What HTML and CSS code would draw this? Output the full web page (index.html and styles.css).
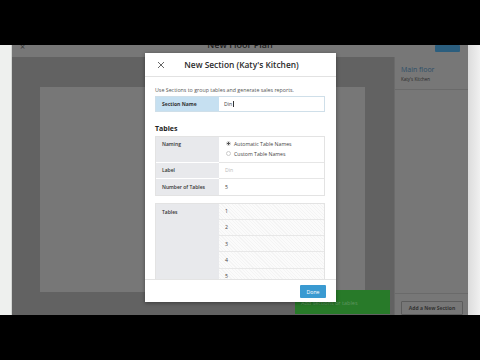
FILE: index.html
```html
<!DOCTYPE html>
<html>
<head>
<meta charset="utf-8">
<link rel="stylesheet" href="styles.css">
</head>
<body>
<div class="screen">
  <div class="bar"></div>
  <div class="stage">
    <div class="side-left"></div>
    <div class="app">
      <header class="app-head">
        <span class="app-close">×</span>
        <span class="app-title">New Floor Plan</span>
        <span class="app-save">Save</span>
      </header>
      <div class="app-body">
        <div class="canvas">
          <div class="floor"></div>
        </div>
        <aside class="panel">
          <div class="panel-top">
            <div class="panel-name">Main floor</div>
            <div class="panel-sub">Katy's Kitchen</div>
          </div>
          <div class="panel-fill"></div>
          <div class="panel-foot">
            <div class="add-btn">Add a New Section</div>
          </div>
        </aside>
      </div>
    </div>
    <div class="side-right"></div>
  </div>
  <div class="bar"></div>

  <div class="toast">Add sections or tables</div>

  <div class="modal">
    <div class="modal-head">
      <svg class="modal-x" width="8" height="8" viewBox="0 0 8 8"><path d="M1 1L7 7M7 1L1 7" stroke="#555" stroke-width="0.9" fill="none"/></svg>
      <div class="modal-title">New Section (Katy's Kitchen)</div>
    </div>
    <div class="modal-body">
      <p class="desc">Use Sections to group tables and generate sales reports.</p>
      <div class="name-row">
        <div class="name-label">Section Name</div>
        <div class="name-input">Din<span class="caret"></span></div>
      </div>
      <h3 class="sec-title">Tables</h3>
      <div class="group">
        <div class="g-label tall">Naming</div>
        <div class="g-val tall">
          <div class="radio-line"><span class="radio on"></span>Automatic Table Names</div>
          <div class="radio-line"><span class="radio"></span>Custom Table Names</div>
        </div>
        <div class="g-label">Label</div>
        <div class="g-val muted">Din</div>
        <div class="g-label last">Number of Tables</div>
        <div class="g-val last">5</div>
      </div>
      <div class="group list">
        <div class="g-label col">Tables</div>
        <div class="list-col">
          <div class="t-row">1</div>
          <div class="t-row">2</div>
          <div class="t-row">3</div>
          <div class="t-row">4</div>
          <div class="t-row">5</div>
        </div>
      </div>
    </div>
    <div class="modal-foot">
      <div class="done">Done</div>
    </div>
  </div>
</div>
</body>
</html>
```

FILE: styles.css
```css
* { box-sizing: border-box; }
html, body { margin: 0; padding: 0; }
body {
  background: #000;
  font-family: "Open Sans", "Liberation Sans", sans-serif;
  width: 480px;
  height: 360px;
  overflow: hidden;
}
.screen { position: relative; width: 480px; height: 360px; display: flex; flex-direction: column; }
.bar { height: 45px; background: #000; flex: none; }
.stage { height: 270px; display: flex; flex: none; }
.side-left { width: 12px; background: #eef0ee; border-right: 1px solid #d4d6d4; }
.side-right { width: 12px; background: linear-gradient(90deg, #dcdcdc, #f0f0f0); }
.app { width: 456px; display: flex; flex-direction: column; }
.app-head {
  height: 12px; background: #777; display: flex; justify-content: space-between;
  align-items: flex-start; overflow: hidden; position: relative; flex: none;
}
.app-close { color: #3a3a3a; font-size: 9px; line-height: 8px; margin: -2px 0 0 8px; }
.app-title {
  position: absolute; left: 0; right: 0; text-align: center; top: -5px;
  font-size: 9px; font-weight: 600; color: #1f1f1f; line-height: 10px;
}
.app-save {
  background: #2b5e7e; color: #2b5e7e; font-size: 5px; width: 25px; height: 7px;
  margin-right: 8px; border-radius: 1px;
}
.app-body { flex: 1; display: flex; }
.canvas { width: 382px; background: #626262; padding: 30px 0 0 28px; }
.floor { width: 325px; height: 205px; background: #777; }
.panel { flex: 1; background: #777; border-left: 1px solid #6b6b6b; display: flex; flex-direction: column; }
.panel-top { height: 33px; padding: 8px 6px 0 6px; border-bottom: 1px solid #6a6a6a; }
.panel-name { font-size: 7px; line-height: 9px; color: #2f4f68; }
.panel-sub { font-size: 4.5px; line-height: 6px; margin-top: 2px; color: #2a2a2a; }
.panel-fill { flex: 1; }
.panel-foot { height: 22px; border-top: 1px solid #6a6a6a; padding: 7px 5px 0 6px; }
.add-btn {
  height: 14px; border: 1px solid #5c5c5c; border-radius: 1px; font-size: 5px; font-weight: 700;
  color: #333; display: flex; align-items: center; justify-content: center;
}

.toast {
  position: absolute; left: 295px; top: 290px; width: 95px; height: 24px;
  background: #287a29; color: #5f9560; font-size: 5.5px; padding: 9px 0 0 6px; line-height: 8px;
}

.modal {
  position: absolute; left: 145px; top: 53px; width: 191px; height: 249px;
  background: #fff; box-shadow: 0 1px 4px rgba(0,0,0,.4); display: flex; flex-direction: column;
}
.modal-head {
  height: 24px; border-bottom: 1px solid #e2e2e2; position: relative; flex: none;
  display: flex; align-items: center; justify-content: center;
}
.modal-x { position: absolute; left: 12px; top: 8px; }
.modal-title { font-size: 8.4px; font-weight: 600; color: #2b2b2b; margin-left: 2px; }
.modal-body { flex: 1; overflow: hidden; padding: 9px 11px 0 10px; }
.desc { margin: 0; font-size: 5.3px; line-height: 8px; color: #555; }
.name-row { display: flex; height: 16px; margin-top: 2px; border: 1px solid #cfdfe9; }
.name-label {
  width: 63px; background: #c6e0f1; font-size: 5px; font-weight: 700; color: #333;
  padding-left: 6px; display: flex; align-items: center;
}
.name-input { flex: 1; font-size: 5.2px; color: #444; padding-left: 5px; display: flex; align-items: center; }
.caret { width: 0.5px; height: 6px; background: #333; margin-left: 0.5px; }
.sec-title { margin: 12px 0 0; font-size: 7px; line-height: 10px; font-weight: 700; color: #222; }
.group {
  display: grid; grid-template-columns: 63px 1fr; margin-top: 2px; border: 1px solid #e3e3e3;
}
.g-label {
  background: #e8e9ec; font-size: 5px; font-weight: 600; color: #333; padding-left: 6px;
  height: 16px; display: flex; align-items: center; border-bottom: 1px solid #fff;
}
.g-val {
  font-size: 5.2px; color: #444; padding-left: 6px; height: 16px; display: flex; align-items: center;
  border-bottom: 1px solid #e6e6e6;
}
.g-label.tall, .g-val.tall { height: 25.5px; }
.g-label.tall { align-items: flex-start; padding-top: 4px; }
.g-val.tall { flex-direction: column; align-items: flex-start; justify-content: center; gap: 4px; padding-bottom: 1px; }
.g-label.last, .g-val.last { border-bottom: 0; }
.g-val.muted { color: #bbb; }
.radio-line { display: flex; align-items: center; font-size: 5.2px; color: #444; line-height: 6px; }
.radio {
  width: 5px; height: 5px; border-radius: 50%; border: 0.6px solid #ccc; margin-right: 3px; margin-left: 1px;
  background: #fff;
}
.radio.on { background: radial-gradient(circle, #555 0 1.1px, #fff 1.4px); }
.group.list { margin-top: 7px; }
.g-label.col { height: auto; align-items: flex-start; padding-top: 5px; }
.list-col { display: flex; flex-direction: column; }
.t-row {
  height: 16.3px; border-bottom: 1px solid #e8e8e8; font-size: 5.2px; color: #444; padding-left: 6px;
  display: flex; align-items: center;
  background: repeating-linear-gradient(45deg, #f4f4f4 0 0.8px, #fbfbfb 0.8px 2.4px);
}
.modal-foot {
  height: 23px; border-top: 1px solid #e4e4e4; flex: none; display: flex; justify-content: flex-end;
  align-items: flex-start; padding: 5px 10px 0 0;
}
.done {
  width: 26px; height: 13px; background: #3a9ad1; color: #fff; font-size: 5.2px; border-radius: 1px;
  display: flex; align-items: center; justify-content: center;
}
```
